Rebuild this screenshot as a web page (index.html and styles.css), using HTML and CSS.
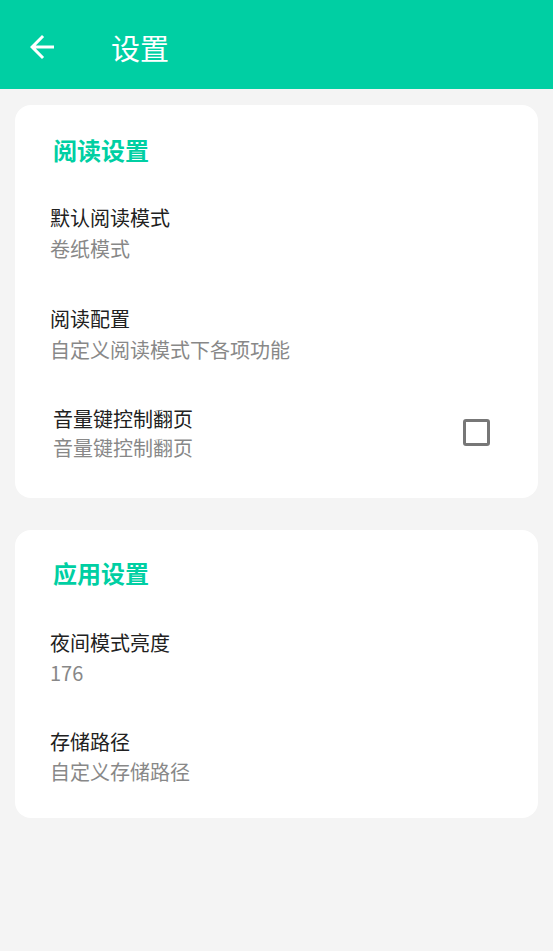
FILE: index.html
```html
<!DOCTYPE html>
<html>
<head>
    <meta charset="utf-8">
    <link rel="stylesheet" href="styles.css">
</head>
<body>
    <div class="toolbar">
        <svg class="back" viewBox="0 0 24 24" width="36" height="36">
            <path d="M20 11H7.83l5.59-5.59L12 4l-8 8 8 8 1.41-1.41L7.83 13H20v-2z" fill="#fff"/>
        </svg>
        <h1>设置</h1>
    </div>

    <div class="card card-read">
        <h3>阅读设置</h3>
        <div class="item">
            <div class="item-title">默认阅读模式</div>
            <div class="item-sub">卷纸模式</div>
        </div>
        <div class="item">
            <div class="item-title">阅读配置</div>
            <div class="item-sub">自定义阅读模式下各项功能</div>
        </div>
        <div class="item item-check">
            <div class="item-text">
                <div class="item-title">音量键控制翻页</div>
                <div class="item-sub">音量键控制翻页</div>
            </div>
            <div class="checkbox"></div>
        </div>
    </div>

    <div class="card card-app">
        <h3>应用设置</h3>
        <div class="item">
            <div class="item-title">夜间模式亮度</div>
            <div class="item-sub">176</div>
        </div>
        <div class="item">
            <div class="item-title">存储路径</div>
            <div class="item-sub">自定义存储路径</div>
        </div>
    </div>
</body>
</html>
```

FILE: styles.css
```css
* {
    box-sizing: border-box;
    margin: 0;
    padding: 0;
}

body {
    width: 553px;
    min-height: 951px;
    font-family: "Noto Sans CJK SC", "Noto Sans", sans-serif;
    background: #f4f4f4;
    color: #212121;
}

.toolbar {
    height: 89px;
    background: #00cfa3;
    display: flex;
    align-items: center;
    padding: 5px 0 0 24px;
}

.toolbar .back {
    display: block;
}

.toolbar h1 {
    color: white;
    font-size: 29px;
    font-weight: 400;
    margin-left: 51px;
    line-height: 40px;
}

.card {
    background: white;
    border-radius: 16px;
    margin: 16px 15px 0;
    padding: 30px 0 17px;
}

.card-app {
    margin-top: 32px;
    padding: 28px 0 12px;
}

.card h3 {
    color: #00cfa3;
    font-size: 24px;
    font-weight: 700;
    line-height: 30px;
    padding-left: 38px;
    margin-bottom: 17px;
}

.card-app h3 {
    margin-bottom: 20px;
}

.item {
    padding: 19.5px 35px;
}

.item-title {
    font-size: 20px;
    line-height: 31px;
}

.item-sub {
    font-size: 20px;
    line-height: 31px;
    color: #888;
}

.card-app .item-title,
.card-app .item-sub {
    line-height: 30px;
}

.item-check {
    display: flex;
    align-items: center;
    justify-content: space-between;
    padding: 20px 48px 19px 38px;
}

.item-check .item-title {
    line-height: 29px;
}

.item-check .item-sub {
    line-height: 29px;
}

.checkbox {
    width: 27px;
    height: 27px;
    border: 3px solid #777;
    border-radius: 3px;
    margin-bottom: 2px;
}
```
